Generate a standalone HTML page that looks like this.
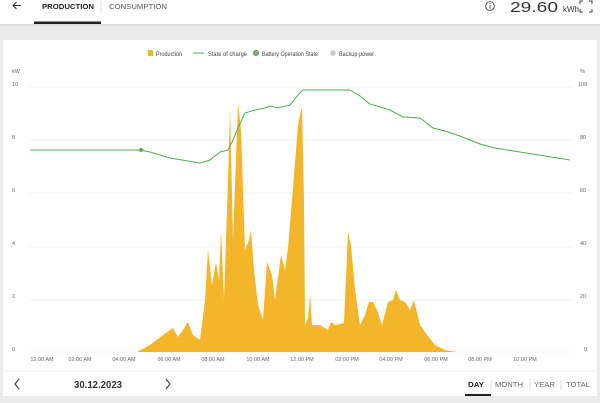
<!DOCTYPE html>
<html><head><meta charset="utf-8"><style>
body{margin:0;width:600px;height:403px;overflow:hidden;background:#ebebeb;font-family:"Liberation Sans",sans-serif}
svg{display:block}
</style></head><body>
<svg width="600" height="403" viewBox="0 0 600 403" xmlns="http://www.w3.org/2000/svg" font-family="Liberation Sans, sans-serif">
<rect x="0" y="0" width="600" height="24" fill="#fff"/>
<rect x="0" y="24" width="600" height="2" fill="#dcdcdc"/>
<rect x="3" y="40" width="594" height="356" fill="#fff"/>
<!-- header -->
<path d="M21 5.5 H13 M16.5 2 L13 5.5 L16.5 9" stroke="#333" stroke-width="1.1" fill="none"/>
<text x="42" y="9" font-size="7.5" font-weight="bold" fill="#222" textLength="52" lengthAdjust="spacingAndGlyphs">PRODUCTION</text>
<rect x="34" y="21.5" width="67" height="2.5" fill="#222"/>
<line x1="101" y1="1" x2="101" y2="12" stroke="#ddd"/>
<text x="109" y="9" font-size="7.5" fill="#555" textLength="58" lengthAdjust="spacingAndGlyphs">CONSUMPTION</text>
<circle cx="490" cy="6" r="4.3" stroke="#444" stroke-width="0.9" fill="none"/>
<line x1="490" y1="5" x2="490" y2="8.5" stroke="#444" stroke-width="0.9"/><circle cx="490" cy="3.5" r="0.5" fill="#444"/>
<text x="510" y="12" font-size="15" fill="#333" textLength="48" lengthAdjust="spacingAndGlyphs">29.60</text>
<text x="563" y="12" font-size="8" fill="#333" textLength="16" lengthAdjust="spacingAndGlyphs">kWh</text>
<path d="M580 4 V1 H583 M589 1 H592 V4 M592 9 V12 H589 M583 12 H580 V9" stroke="#444" stroke-width="1" fill="none"/>
<!-- legend -->
<rect x="148" y="50" width="5" height="6" fill="#f5b52a"/>
<text x="156" y="56" font-size="6" fill="#444" textLength="26" lengthAdjust="spacingAndGlyphs">Production</text>
<line x1="193" y1="53" x2="204" y2="53" stroke="#4caf50" stroke-width="1"/>
<text x="208" y="56" font-size="6" fill="#444" textLength="39" lengthAdjust="spacingAndGlyphs">State of charge</text>
<circle cx="256" cy="53" r="2.8" fill="#9a9a9a" stroke="#5cb85c" stroke-width="0.8"/>
<text x="262" y="56" font-size="6" fill="#444" textLength="56" lengthAdjust="spacingAndGlyphs">Battery Operation State</text>
<circle cx="333" cy="53" r="2.8" fill="#c8c8c8"/>
<text x="339" y="56" font-size="6" fill="#444" textLength="35" lengthAdjust="spacingAndGlyphs">Backup power</text>
<!-- axes labels -->
<g font-size="5.5" fill="#666">
<text x="12" y="73">kW</text><text x="580" y="73">%</text>
<text x="12" y="86">10</text><text x="12" y="139">8</text><text x="12" y="192">6</text><text x="12" y="245">4</text><text x="12" y="298">2</text><text x="12" y="351">0</text>
<text x="578" y="86">100</text><text x="580" y="139">80</text><text x="580" y="192">60</text><text x="580" y="245">40</text><text x="580" y="298">20</text><text x="584" y="351">0</text>
</g>
<g stroke="#ececec" stroke-width="0.8">
<line x1="30" y1="87" x2="572" y2="87"/><line x1="30" y1="140" x2="572" y2="140"/><line x1="30" y1="193" x2="572" y2="193"/><line x1="30" y1="247" x2="572" y2="247"/><line x1="30" y1="300" x2="572" y2="300"/>
<line x1="30" y1="352" x2="572" y2="352" stroke-dasharray="2,2"/>
</g>
<path fill="#f5b52a" d="M137 352 L150 345 L163 335 L173 328 L178 337 L183 330 L188 322 L193 335 L200 340 L205 300 L208 250 L212 285 L216 262 L219 280 L221 230 L224 300 L228 180 L230 108 L233 240 L238 103 L241 130 L245 250 L249 240 L251 230 L254 270 L258 305 L263 320 L267 262 L272 275 L275 300 L281 255 L285 270 L288 248 L292 200 L298 125 L301 110 L302 109 L304 200 L305 325 L308 318 L310 295 L312 325 L320 325 L328 330 L331 322 L335 325 L344 323 L348 232 L351 245 L355 290 L360 325 L365 315 L369 302 L373 302 L377 310 L382 325 L388 302 L393 300 L396 290 L400 300 L405 302 L410 310 L414 300 L420 325 L427 335 L435 345 L445 350 L457 352 Z"/>
<polyline fill="none" stroke="#4caf50" stroke-width="1" points="30,150 140,150 150,152 170,158 200,163 210,160 220,152 228,150 233,140 238,128 245,113 255,110 265,108 270,106 278,108 290,105 298,95 303,90 350,90 360,96 370,104 390,110 403,117 420,118 433,128 445,131 460,136 470,140 480,144 495,148 520,152 545,156 570,160"/>
<circle cx="141" cy="150" r="2" fill="#4caf50"/>
<g font-size="5.5" fill="#666" text-anchor="middle">
<text x="42" y="361">12:00 AM</text><text x="80" y="361">02:00 AM</text><text x="124" y="361">04:00 AM</text><text x="169" y="361">06:00 AM</text><text x="213" y="361">08:00 AM</text><text x="258" y="361">10:00 AM</text><text x="302" y="361">12:00 PM</text><text x="347" y="361">02:00 PM</text><text x="391" y="361">04:00 PM</text><text x="436" y="361">06:00 PM</text><text x="480" y="361">08:00 PM</text><text x="525" y="361">10:00 PM</text>
</g>
<line x1="3" y1="371" x2="597" y2="371" stroke="#ececec"/>
<path d="M19 379 L15 384 L19 389" stroke="#444" stroke-width="1.2" fill="none"/>
<text x="98" y="388" font-size="10.5" font-weight="bold" fill="#333" text-anchor="middle" textLength="48" lengthAdjust="spacingAndGlyphs">30.12.2023</text>
<path d="M166 379 L170 384 L166 389" stroke="#444" stroke-width="1.2" fill="none"/>
<g font-size="7">
<text x="468" y="387" font-weight="bold" fill="#222" textLength="16" lengthAdjust="spacingAndGlyphs">DAY</text>
<text x="495" y="387" fill="#666" textLength="28" lengthAdjust="spacingAndGlyphs">MONTH</text>
<text x="534" y="387" fill="#666" textLength="21" lengthAdjust="spacingAndGlyphs">YEAR</text>
<text x="566" y="387" fill="#666" textLength="24" lengthAdjust="spacingAndGlyphs">TOTAL</text>
</g>
<g stroke="#ddd"><line x1="491" y1="379" x2="491" y2="390"/><line x1="530" y1="379" x2="530" y2="390"/><line x1="561" y1="379" x2="561" y2="390"/></g>
<rect x="465" y="394" width="26" height="2" fill="#222"/>
</svg>
</body></html>
